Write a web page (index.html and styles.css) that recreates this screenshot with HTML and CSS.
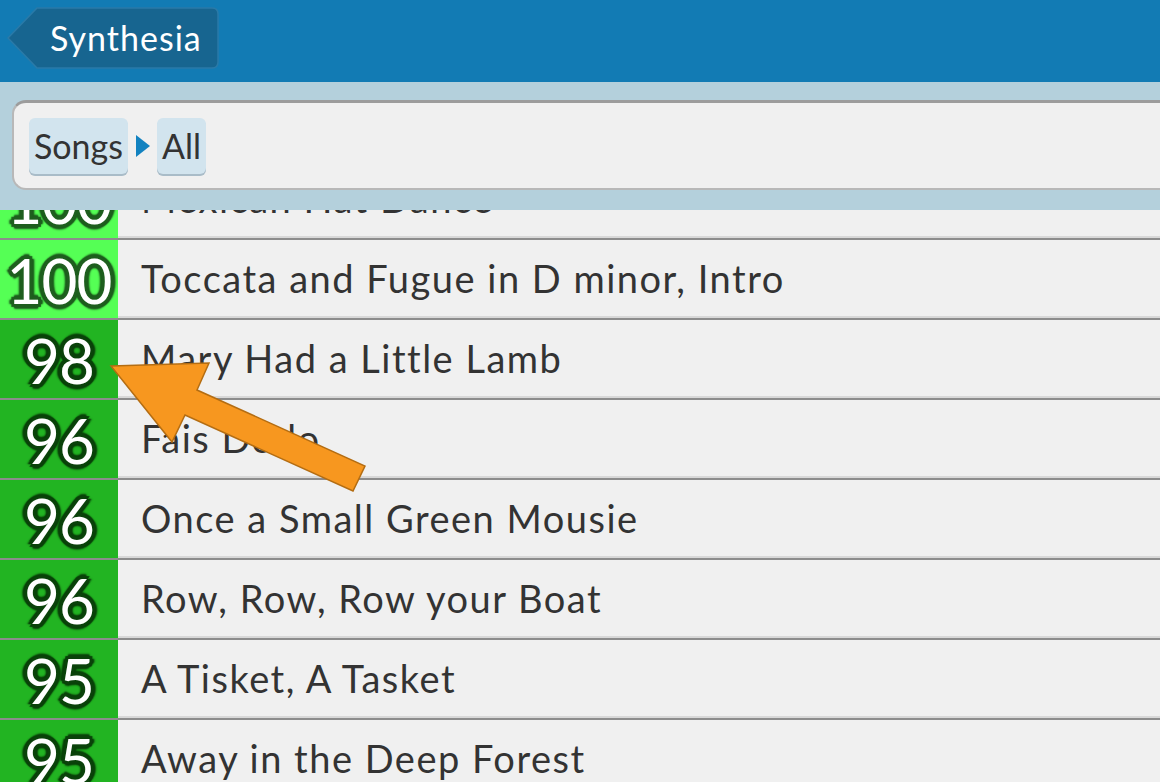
FILE: index.html
```html
<!DOCTYPE html>
<html>
<head>
<meta charset="utf-8">
<link rel="stylesheet" href="styles.css">
</head>
<body>
<div class="screen">
  <ul class="songs">
    <li class="row top"><span class="score">100</span><span class="title">Mexican Hat Dance</span></li>
    <li class="row top"><span class="score">100</span><span class="title">Toccata and Fugue in D minor, Intro</span></li>
    <li class="row"><span class="score">98</span><span class="title">Mary Had a Little Lamb</span></li>
    <li class="row"><span class="score">96</span><span class="title">Fais Dodo</span></li>
    <li class="row"><span class="score">96</span><span class="title">Once a Small Green Mousie</span></li>
    <li class="row"><span class="score">96</span><span class="title">Row, Row, Row your Boat</span></li>
    <li class="row"><span class="score">95</span><span class="title">A Tisket, A Tasket</span></li>
    <li class="row"><span class="score">95</span><span class="title">Away in the Deep Forest</span></li>
  </ul>
  <header class="header">
    <div class="topbar">
      <div class="back">
        <svg class="back-bg" width="212" height="62" viewBox="0 0 212 62"><path d="M1 31 L30 1 L205 1 Q211 1 211 7 L211 55 Q211 61 205 61 L30 61 Z" fill="#176590" stroke="#2a7aa8" stroke-width="1.5"/></svg>
        <span class="back-label">Synthesia</span>
      </div>
    </div>
    <div class="crumbbar">
      <div class="crumbpanel">
        <span class="crumb">Songs</span>
        <svg class="sep" width="14" height="22" viewBox="0 0 14 22"><path d="M0 0 L14 11 L0 22 Z" fill="#1282c0"/></svg>
        <span class="crumb">All</span>
      </div>
    </div>
  </header>
  <svg class="pointer" width="1160" height="782" viewBox="0 0 1160 782"><polygon points="111,366 209,363 197,390 365,466 353,491 185,415 172,442" fill="#f7971f" stroke="#b46d12" stroke-width="1.5" stroke-linejoin="miter"/></svg>
</div>
</body>
</html>
```
FILE: styles.css
```css
html, body { margin: 0; padding: 0; }
body { width: 1160px; height: 782px; overflow: hidden; background: #f0f0f0; font-family: Lato, "Noto Sans", sans-serif; }
.screen { position: relative; width: 1160px; height: 782px; overflow: hidden; }
.songs { list-style: none; margin: 0; padding: 160px 0 0 0; }
.row { display: flex; align-items: stretch; height: 78px; border-bottom: 2px solid #8c8c8c; box-shadow: inset 0 -2px 0 #d8d8d8; background: #f0f0f0; }
.score { width: 118px; flex: none; display: flex; align-items: center; justify-content: center; background: #22b422; color: #fff; font-size: 62px; font-weight: 400; letter-spacing: -1px; padding-top: 2px;
  text-shadow: 3px 0 0 #0a420a, -3px 0 0 #0a420a, 0 3px 0 #0a420a, 0 -3px 0 #0a420a, 2px 2px 0 #0a420a, -2px 2px 0 #0a420a, 2px -2px 0 #0a420a, -2px -2px 0 #0a420a, 4px 0 1px #0a420a, -4px 0 1px #0a420a, 0 4px 1px #0a420a, 0 -4px 1px #0a420a, 3px 3px 1px #0a420a, -3px 3px 1px #0a420a, 3px -3px 1px #0a420a, -3px -3px 1px #0a420a, 5px 0 2px #0a420a, -5px 0 2px #0a420a, 0 5px 2px #0a420a, 0 -5px 2px #0a420a; }
.row.top .score { background: #55ff55;
  text-shadow: 3px 0 0 #1e5e1e, -3px 0 0 #1e5e1e, 0 3px 0 #1e5e1e, 0 -3px 0 #1e5e1e, 2px 2px 0 #1e5e1e, -2px 2px 0 #1e5e1e, 2px -2px 0 #1e5e1e, -2px -2px 0 #1e5e1e, 4px 0 1px #1e5e1e, -4px 0 1px #1e5e1e, 0 4px 1px #1e5e1e, 0 -4px 1px #1e5e1e, 3px 3px 1px #1e5e1e, -3px 3px 1px #1e5e1e, 3px -3px 1px #1e5e1e, -3px -3px 1px #1e5e1e, 5px 0 2px #1e5e1e, -5px 0 2px #1e5e1e, 0 5px 2px #1e5e1e, 0 -5px 2px #1e5e1e; }
.title { display: flex; align-items: center; padding-left: 23px; padding-bottom: 3px; font-size: 38px; letter-spacing: 1.5px; color: #333; }
.header { position: absolute; left: 0; top: 0; width: 1160px; }
.topbar { height: 82px; background: #127bb4; display: flex; align-items: flex-start; padding: 7px 0 0 7px; box-sizing: border-box; }
.back { position: relative; width: 212px; height: 62px; display: flex; align-items: center; }
.back-bg { position: absolute; left: 0; top: 0; }
.back-label { position: relative; margin-left: 43px; color: #fff; font-size: 34px; letter-spacing: 1px; padding-bottom: 2px; }
.crumbbar { height: 128px; background: #b4d0dc; padding: 18px 0 0 12px; box-sizing: border-box; }
.crumbpanel { height: 90px; box-sizing: border-box; background: #f0f0f0; border: 2px solid #b8b8b8; border-top: 3px solid #9c9c9c; border-right: none; border-radius: 14px 0 0 14px; display: flex; align-items: center; padding-left: 15px; gap: 7px; }
.crumb { height: 56px; display: flex; align-items: center; padding: 0 5px; background: #d2e4ee; border-radius: 6px; box-shadow: 0 2px 0 #a9bcc8; font-size: 34px; color: #333; box-sizing: border-box; }
.sep { margin: 0 0 0 1px; }
.pointer { position: absolute; left: 0; top: 0; pointer-events: none; }
```
